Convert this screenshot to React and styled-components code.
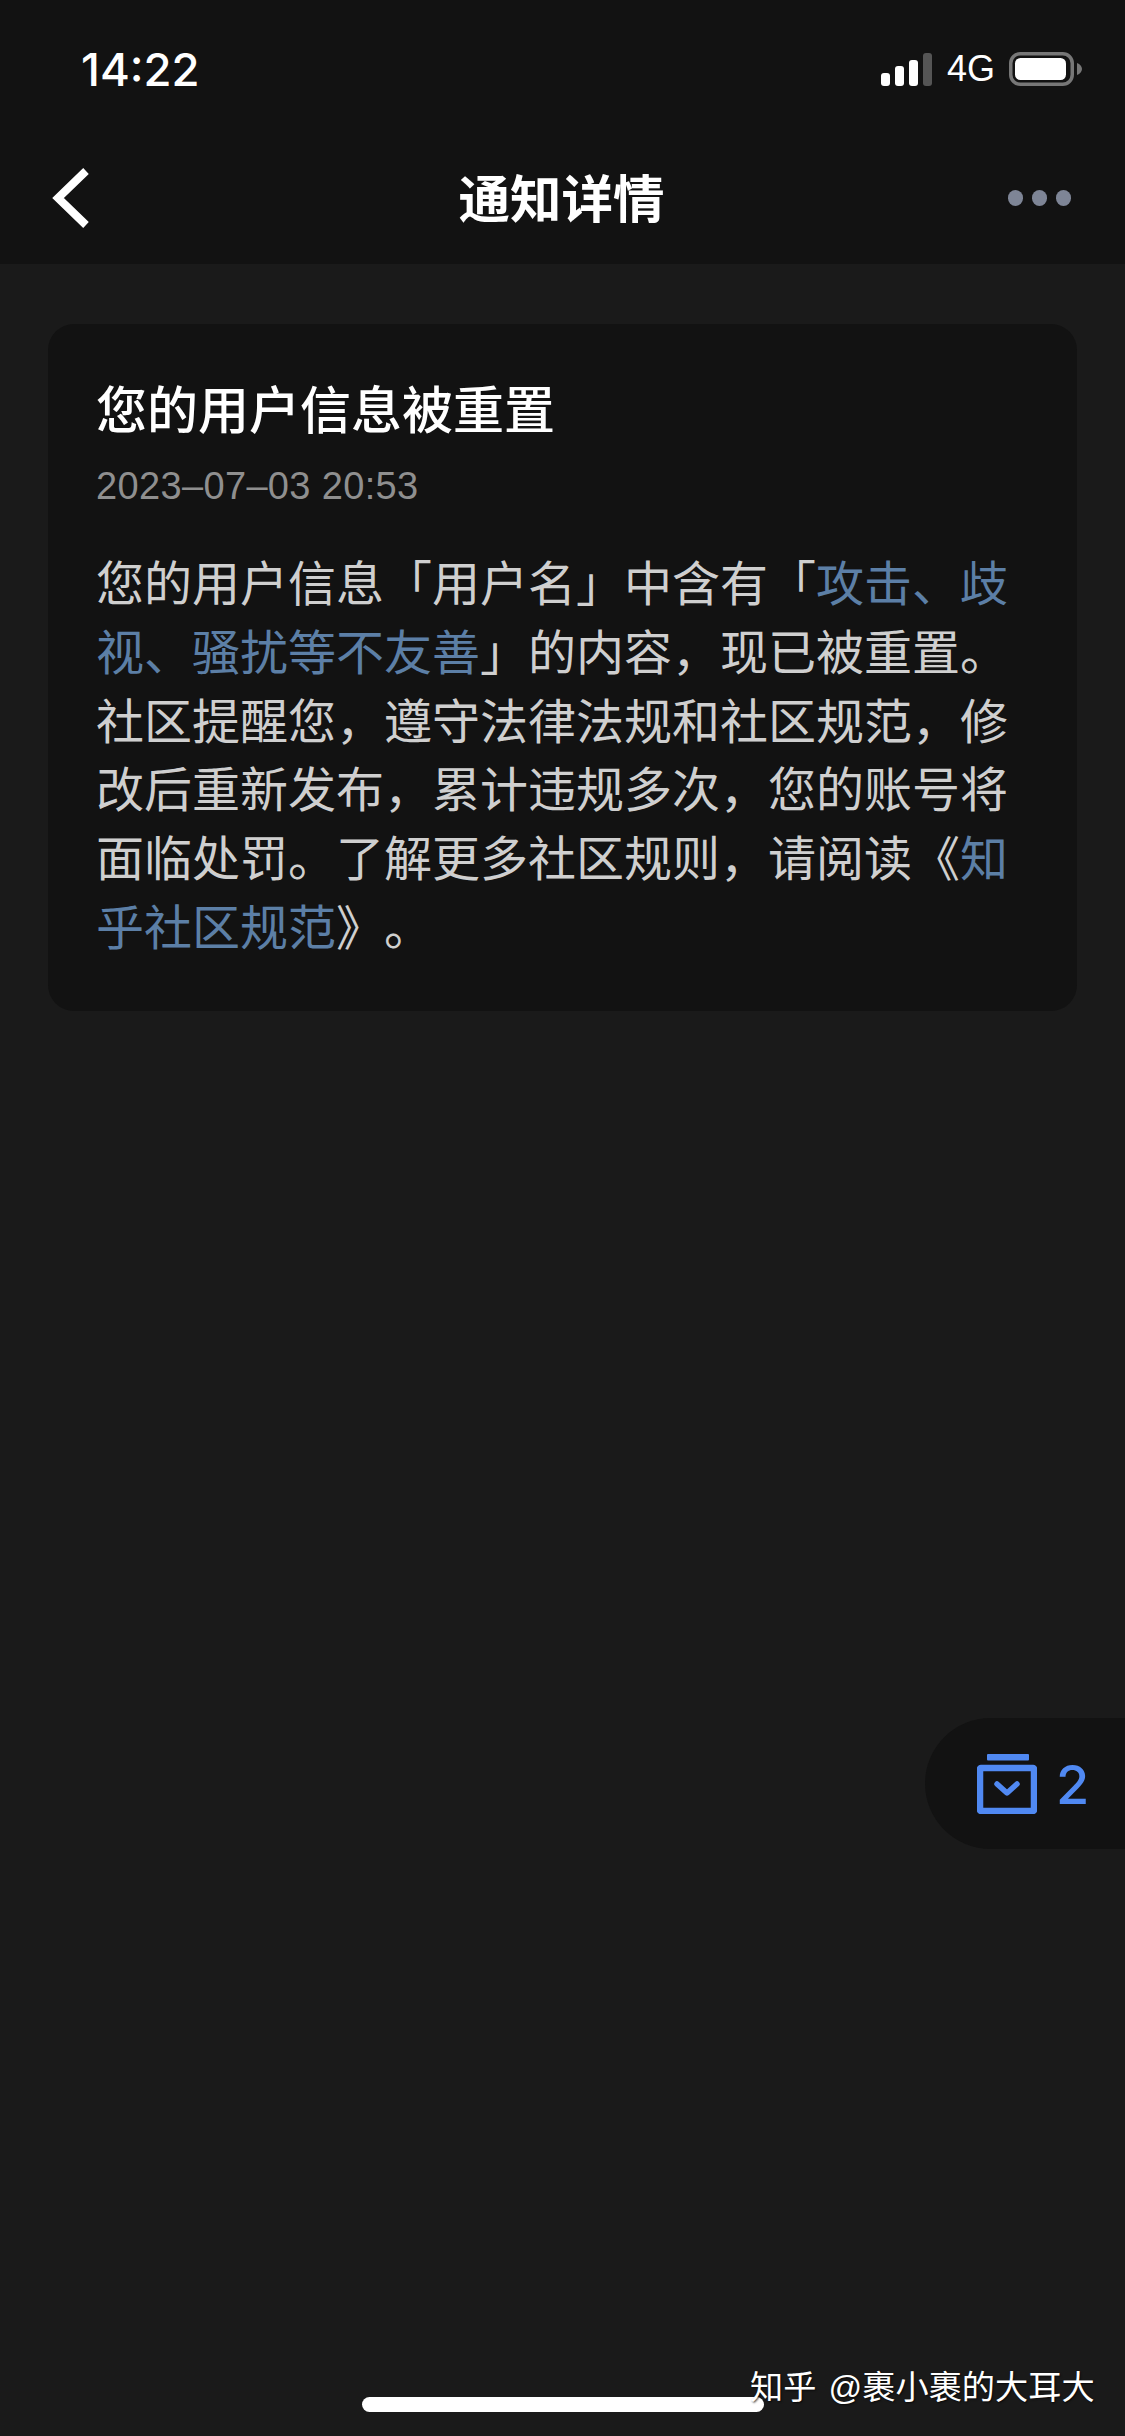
import React from "react";
import styled, { createGlobalStyle } from "styled-components";

const Global = createGlobalStyle`
  html, body { margin: 0; padding: 0; background: #1a1a1a; }
  * { box-sizing: border-box; }
`;

const CJK = `"Liberation Sans", "Noto Sans CJK SC", sans-serif`;

const Page = styled.div`
  position: relative;
  width: 1125px;
  height: 2436px;
  overflow: hidden;
  background: #1a1a1a;
  font-family: ${CJK};
`;

const Header = styled.header`
  background: #121212;
  height: 264px;
  display: flex;
  flex-direction: column;
`;

const StatusBar = styled.div`
  height: 132px;
  padding: 6px 43px 0 81px;
  display: flex;
  align-items: center;
  justify-content: space-between;
  color: #fff;
`;

const Time = styled.span`
  font-family: Inter, sans-serif;
  font-weight: 500;
  font-size: 45.5px;
`;

const StatusRight = styled.div`
  display: flex;
  align-items: center;
`;

const Network = styled.span`
  font-family: "Liberation Sans", sans-serif;
  font-size: 36px;
  margin: 0 14px 0 14px;
  line-height: 1;
`;

const NavBar = styled.nav`
  height: 132px;
  padding: 0 54px 0 52px;
  display: grid;
  grid-template-columns: 1fr auto 1fr;
  align-items: center;
`;

const NavTitle = styled.h1`
  margin: 0 0 5px;
  text-align: center;
  color: #fff;
  font-size: 51.5px;
  font-weight: 700;
  line-height: 1;
  font-family: "Noto Sans CJK SC", sans-serif;
`;

const Dots = styled.div`
  display: flex;
  gap: 8.5px;
  justify-content: flex-end;
`;

const Dot = styled.span`
  width: 15.5px;
  height: 15.5px;
  border-radius: 50%;
  background: #7e8596;
`;

const Content = styled.main`
  padding: 60px 48px 0;
`;

const Card = styled.section`
  background: #121212;
  border-radius: 26px;
  padding: 51px 44px 50px 48px;
  height: 687px;
`;

const Title = styled.h2`
  margin: 0;
  color: #fff;
  font-family: "Noto Sans CJK SC", sans-serif;
  font-size: 51px;
  font-weight: 500;
  line-height: 64px;
`;

const DateText = styled.div`
  margin-top: 23px;
  color: #8f8f8f;
  font-family: "Liberation Sans", sans-serif;
  font-size: 38px;
  letter-spacing: 0.35px;
  line-height: 48px;
`;

const Body = styled.p`
  margin: 36px 0 0;
  color: #cfcfcf;
  font-family: "Noto Sans CJK SC", sans-serif;
  font-size: 48px;
  font-weight: 400;
  line-height: 68.8px;
  text-spacing-trim: space-all;
`;

const Link = styled.span`
  color: #5c7fa6;
`;

const Pill = styled.div`
  position: absolute;
  left: 925px;
  top: 1718px;
  width: 200px;
  height: 131px;
  background: #121212;
  border-radius: 66px 0 0 66px;
  display: flex;
  align-items: center;
  padding-left: 52px;
  gap: 19px;
`;

const Count = styled.span`
  color: #5089f2;
  font-family: Inter, sans-serif;
  font-size: 54px;
  font-weight: 500;
  line-height: 1;
  padding-top: 3px;
`;

const HomeIndicator = styled.div`
  position: absolute;
  left: 362px;
  top: 2397px;
  width: 402px;
  height: 15px;
  border-radius: 8px;
  background: #fff;
`;

const Watermark = styled.div`
  position: absolute;
  left: 750px;
  top: 2366px;
  color: #fff;
  font-family: "Liberation Sans", "Noto Sans CJK SC", sans-serif;
  font-size: 33.2px;
  line-height: 44px;
  white-space: nowrap;
  word-spacing: 3px;
  text-shadow: 1px 1px 2px rgba(0, 0, 0, 0.7);
`;

const SignalIcon = () => (
  <svg width="52" height="33" viewBox="0 0 52 33">
    <rect x="0" y="20" width="9" height="13" rx="3" fill="#fff" />
    <rect x="14" y="13" width="9" height="20" rx="3" fill="#fff" />
    <rect x="28" y="7" width="9" height="26" rx="3" fill="#fff" />
    <rect x="42" y="0" width="9" height="33" rx="3" fill="#555" />
  </svg>
);

const BatteryIcon = () => (
  <svg width="73" height="34" viewBox="0 0 73 34">
    <rect x="1.75" y="1.75" width="61.5" height="30.5" rx="9.5" fill="none" stroke="#777" strokeWidth="3.5" />
    <rect x="6" y="6" width="51" height="22" rx="5.5" fill="#fff" />
    <path d="M68 11 C71 12 73 14.5 73 17 C73 19.5 71 22 68 23 Z" fill="#777" />
  </svg>
);

const BackIcon = () => (
  <svg width="38" height="60" viewBox="0 0 38 60">
    <path d="M34 3 L6 30 L34 57" fill="none" stroke="#fff" strokeWidth="8" strokeLinecap="butt" strokeLinejoin="miter" />
  </svg>
);

const InboxIcon = () => (
  <svg width="60" height="60" viewBox="0 0 60 60">
    <rect x="10" y="0" width="42" height="6.5" rx="1" fill="#5089f2" />
    <rect x="3" y="14" width="54" height="43" rx="1" fill="none" stroke="#5089f2" strokeWidth="6.5" />
    <path d="M20 30 L30 39 L40 30" fill="none" stroke="#5089f2" strokeWidth="5.5" strokeLinecap="round" strokeLinejoin="round" />
  </svg>
);

export default function App() {
  return (
    <Page>
      <Global />
      <Header>
        <StatusBar>
          <Time>14:22</Time>
          <StatusRight>
            <SignalIcon />
            <Network>4G</Network>
            <BatteryIcon />
          </StatusRight>
        </StatusBar>
        <NavBar>
          <BackIcon />
          <NavTitle>通知详情</NavTitle>
          <Dots>
            <Dot />
            <Dot />
            <Dot />
          </Dots>
        </NavBar>
      </Header>
      <Content>
        <Card>
          <Title>您的用户信息被重置</Title>
          <DateText>2023–07–03 20:53</DateText>
          <Body>
            您的用户信息「用户名」中含有「<Link>攻击、歧视、骚扰等不友善</Link>」的内容，现已被重置。社区提醒您，遵守法律法规和社区规范，修改后重新发布，累计违规多次，您的账号将面临处罚。了解更多社区规则，请阅读《<Link>知乎社区规范</Link>》。
          </Body>
        </Card>
      </Content>
      <Pill>
        <InboxIcon />
        <Count>2</Count>
      </Pill>
      <HomeIndicator />
      <Watermark>知乎 @裹小裹的大耳大</Watermark>
    </Page>
  );
}
